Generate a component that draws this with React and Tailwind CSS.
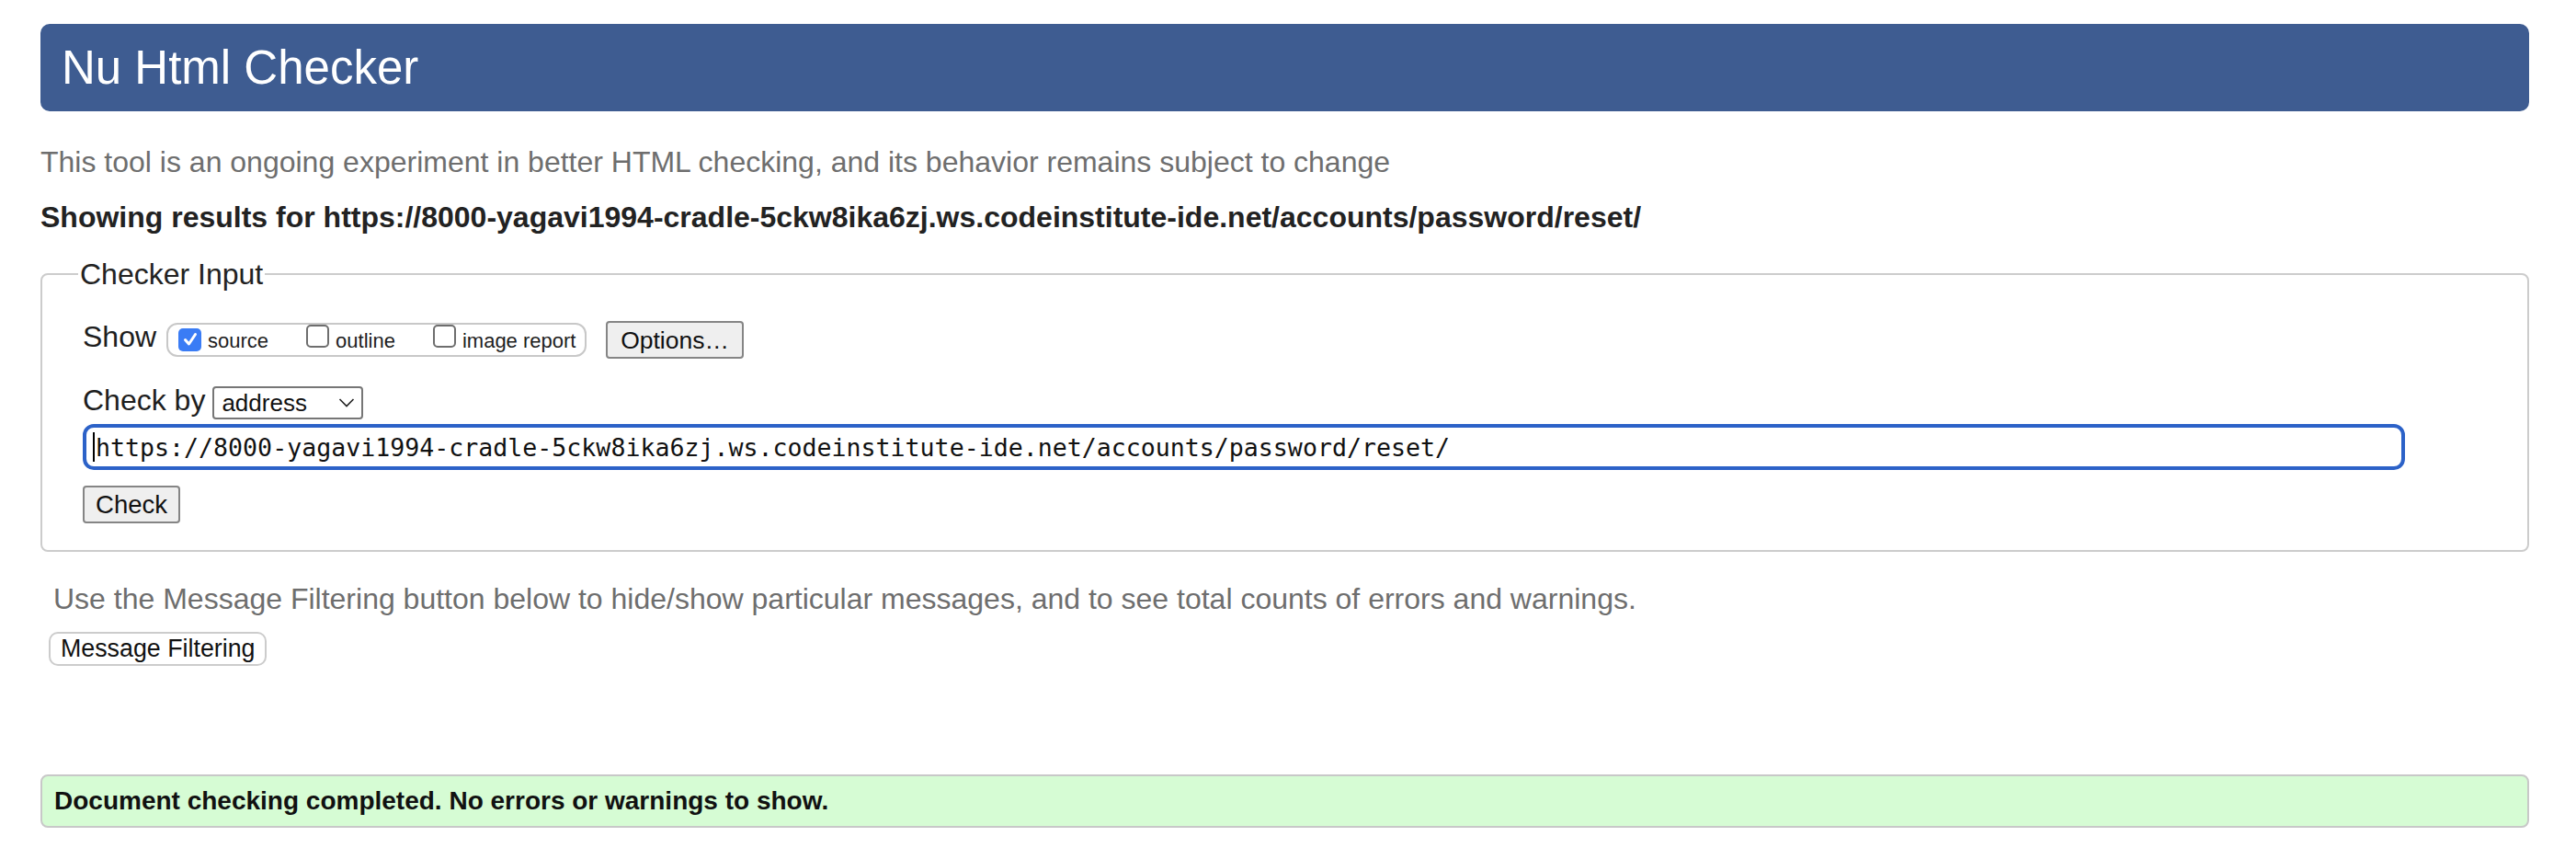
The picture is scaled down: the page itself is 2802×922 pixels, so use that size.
export default function App() {
  const url =
    "https://8000-yagavi1994-cradle-5ckw8ika6zj.ws.codeinstitute-ide.net/accounts/password/reset/";
  return (
    <div className="min-h-[922px] bg-white pl-[44px] pr-[51px] pt-[26px] font-['Liberation_Sans',Arial,sans-serif]">
      <header className="flex h-[95px] items-center rounded-[10px] bg-[#3e5c91] pl-[23px]">
        <h1 className="text-[51px] font-normal leading-[52px] text-white">Nu Html Checker</h1>
      </header>

      <p className="mt-[39px] text-[32px] leading-[32px] text-[#6e6e6e]">
        This tool is an ongoing experiment in better HTML checking, and its behavior remains subject to change
      </p>
      <p className="mt-[28px] text-[32px] font-bold leading-[32px] text-[#222222]">
        Showing results for {url}
      </p>

      <fieldset className="mt-[30px] rounded-[8px] border-2 border-[#cccccc] pb-[29px] pl-[39px] pr-[40px]">
        <legend className="px-[2px] text-[32px] leading-[32px] text-[#222222]">Checker Input</legend>

        <div className="mt-[35px] flex h-[41px] items-start pl-[5px]">
          <span className="mt-[2px] text-[32px] leading-[30px] text-[#1e1e1e]">Show</span>
          <div className="ml-[11px] mt-[2px] flex h-[37px] w-[457px] items-baseline rounded-[12px] border-2 border-[#c8c8c8] pl-[11px] text-[22px] leading-[22px] text-[#1e1e1e]">
            <span className="flex h-[25px] w-[25px] items-center justify-center rounded-[5px] bg-[#3a7cf5]">
              <svg width="18" height="18" viewBox="0 0 18 18">
                <path d="M3.5 9.5 L7.5 14 L14.5 3.5" fill="none" stroke="white" strokeWidth="3" strokeLinecap="round" strokeLinejoin="round" />
              </svg>
            </span>
            <span className="ml-[7px]">source</span>
            <span className="ml-[41px] h-[25px] w-[25px] rounded-[5px] border-2 border-[#6e6e6e] bg-white"></span>
            <span className="ml-[7px]">outline</span>
            <span className="ml-[41px] h-[25px] w-[25px] rounded-[5px] border-2 border-[#6e6e6e] bg-white"></span>
            <span className="ml-[7px]">image report</span>
          </div>
          <button className="ml-[21px] h-[41px] w-[150px] rounded-[4px] border-2 border-[#858585] bg-[#efefef] text-[26.5px] leading-[26px] text-[#111]">
            Options…
          </button>
        </div>

        <div className="mt-[30px] flex h-[36px] items-start pl-[5px]">
          <span className="text-[32px] leading-[30px] text-[#1e1e1e]">Check by</span>
          <div className="ml-[8px] flex h-[36px] w-[164px] items-center justify-between rounded-[4px] border-2 border-[#767676] bg-white pl-[8px] pr-[7px] text-[26px] leading-[26px] text-[#111]">
            <span>address</span>
            <svg width="18" height="12" viewBox="0 0 18 12">
              <path d="M1.5 2 L9 9.5 L16.5 2" fill="none" stroke="#222" strokeWidth="1.6" />
            </svg>
          </div>
        </div>

        <div className="ml-[5px] mt-[5px] flex h-[50px] w-[2526px] items-center rounded-[12px] border-[4px] border-[#2c62c8] bg-white pl-[7px]">
          <span className="h-[32px] w-[2px] bg-black"></span>
          <span className="ml-[1px] font-['DejaVu_Sans_Mono',monospace] text-[26.6px] leading-[27px] text-[#111]">
            {url}
          </span>
        </div>

        <div className="mt-[17px] pl-[5px]">
          <button className="h-[41px] w-[106px] rounded-[4px] border-2 border-[#858585] bg-[#efefef] text-[27.5px] leading-[27px] text-[#111]">
            Check
          </button>
        </div>
      </fieldset>

      <p className="mt-[35px] pl-[14px] text-[32px] leading-[32px] text-[#6e6e6e]">
        Use the Message Filtering button below to hide/show particular messages, and to see total counts of errors and warnings.
      </p>
      <button className="ml-[9px] mt-[20px] flex h-[37px] items-center rounded-[10px] border-2 border-[#cccccc] bg-white pl-[11px] pr-[11px] text-[26.8px] leading-[27px] text-[#111]">
        Message Filtering
      </button>

      <div className="mt-[118px] flex h-[58px] items-center rounded-[8px] border-2 border-[#c8c8c8] bg-[#d6fcd4] pl-[13px]">
        <span className="text-[28px] font-bold leading-[28px] text-[#111]">
          Document checking completed. No errors or warnings to show.
        </span>
      </div>
    </div>
  );
}
